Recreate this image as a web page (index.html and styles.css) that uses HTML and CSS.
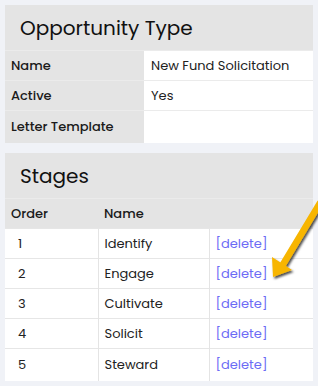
FILE: index.html
```html
<!DOCTYPE html>
<html lang="en">
<head>
    <meta charset="UTF-8">
    <meta name="viewport" content="width=device-width, initial-scale=1.0">
    <title>Opportunity Type</title>
    <link rel="stylesheet" href="styles.css">
</head>
<body>
    <div class="card">
        <h2 class="card-title">Opportunity Type</h2>
        <table class="details">
            <tr>
                <th>Name</th>
                <td>New Fund Solicitation</td>
            </tr>
            <tr>
                <th>Active</th>
                <td>Yes</td>
            </tr>
            <tr class="last">
                <th>Letter Template</th>
                <td></td>
            </tr>
        </table>
    </div>

    <div class="card">
        <h2 class="card-title">Stages</h2>
        <table class="stages">
            <thead>
                <tr>
                    <th class="col-order">Order</th>
                    <th class="col-name">Name</th>
                    <th class="col-action"></th>
                </tr>
            </thead>
            <tbody>
                <tr><td class="num">1</td><td>Identify</td><td><a href="#">[delete]</a></td></tr>
                <tr><td class="num">2</td><td>Engage</td><td><a href="#">[delete]</a></td></tr>
                <tr><td class="num">3</td><td>Cultivate</td><td><a href="#">[delete]</a></td></tr>
                <tr><td class="num">4</td><td>Solicit</td><td><a href="#">[delete]</a></td></tr>
                <tr class="last"><td class="num">5</td><td>Steward</td><td><a href="#">[delete]</a></td></tr>
            </tbody>
        </table>
    </div>

    <!-- callout arrow pointing at the delete link -->
    <svg class="callout" width="60" height="90" viewBox="262 198 60 90" aria-hidden="true">
        <defs>
            <filter id="arrowShadow" x="-30%" y="-30%" width="160%" height="160%">
                <feDropShadow dx="1.5" dy="2" stdDeviation="1" flood-color="#000" flood-opacity="0.7"/>
            </filter>
        </defs>
        <g filter="url(#arrowShadow)" fill="#f7b500">
            <path d="M320 203 L282 266" stroke="#f7b500" stroke-width="6.5" stroke-linecap="round"/>
            <path d="M273 277 L272 257 L292 270 Z"/>
        </g>
    </svg>
</body>
</html>
```

FILE: styles.css
```css
body {
    margin: 0;
    padding: 5px;
    background-color: #f0f2f7;
    font-family: 'Poppins', 'Inter', sans-serif;
    color: #222;
    font-size: 13px;
}

.card {
    background-color: #fff;
    margin-bottom: 10px;
}

.card-title {
    margin: 0;
    height: 45px;
    line-height: 46px;
    padding-left: 15px;
    background-color: #e4e4e4;
    font-size: 20px;
    font-weight: 400;
    color: #111;
}

table {
    width: 100%;
    border-collapse: collapse;
}

th, td {
    height: 29px;
    padding: 0 6px;
    text-align: left;
    border-top: 1px solid #ebebeb;
}

th {
    font-weight: 500;
    color: #1a1a1a;
}

tr.last th,
tr.last td {
    height: 32px;
}

/* details table: grey label column */
.details th {
    width: 127px;
    background-color: #e4e4e4;
}

.details td {
    padding-left: 7px;
}

/* stages table */
.stages thead th {
    background-color: #e4e4e4;
    border-top: 1px solid #ebebeb;
}

.stages .col-order { width: 81px; }
.stages .col-name { width: 99px; }

.stages tbody td {
    border-left: 1px solid #e4e4e4;
    border-top: 1px solid #e6e6e6;
}

.stages tbody td:first-child {
    border-left: none;
}

.stages td.num {
    padding-left: 13px;
}

.stages a {
    color: #6b6bf5;
    text-decoration: none;
}

.callout {
    position: absolute;
    left: 262px;
    top: 198px;
    overflow: visible;
}
```
